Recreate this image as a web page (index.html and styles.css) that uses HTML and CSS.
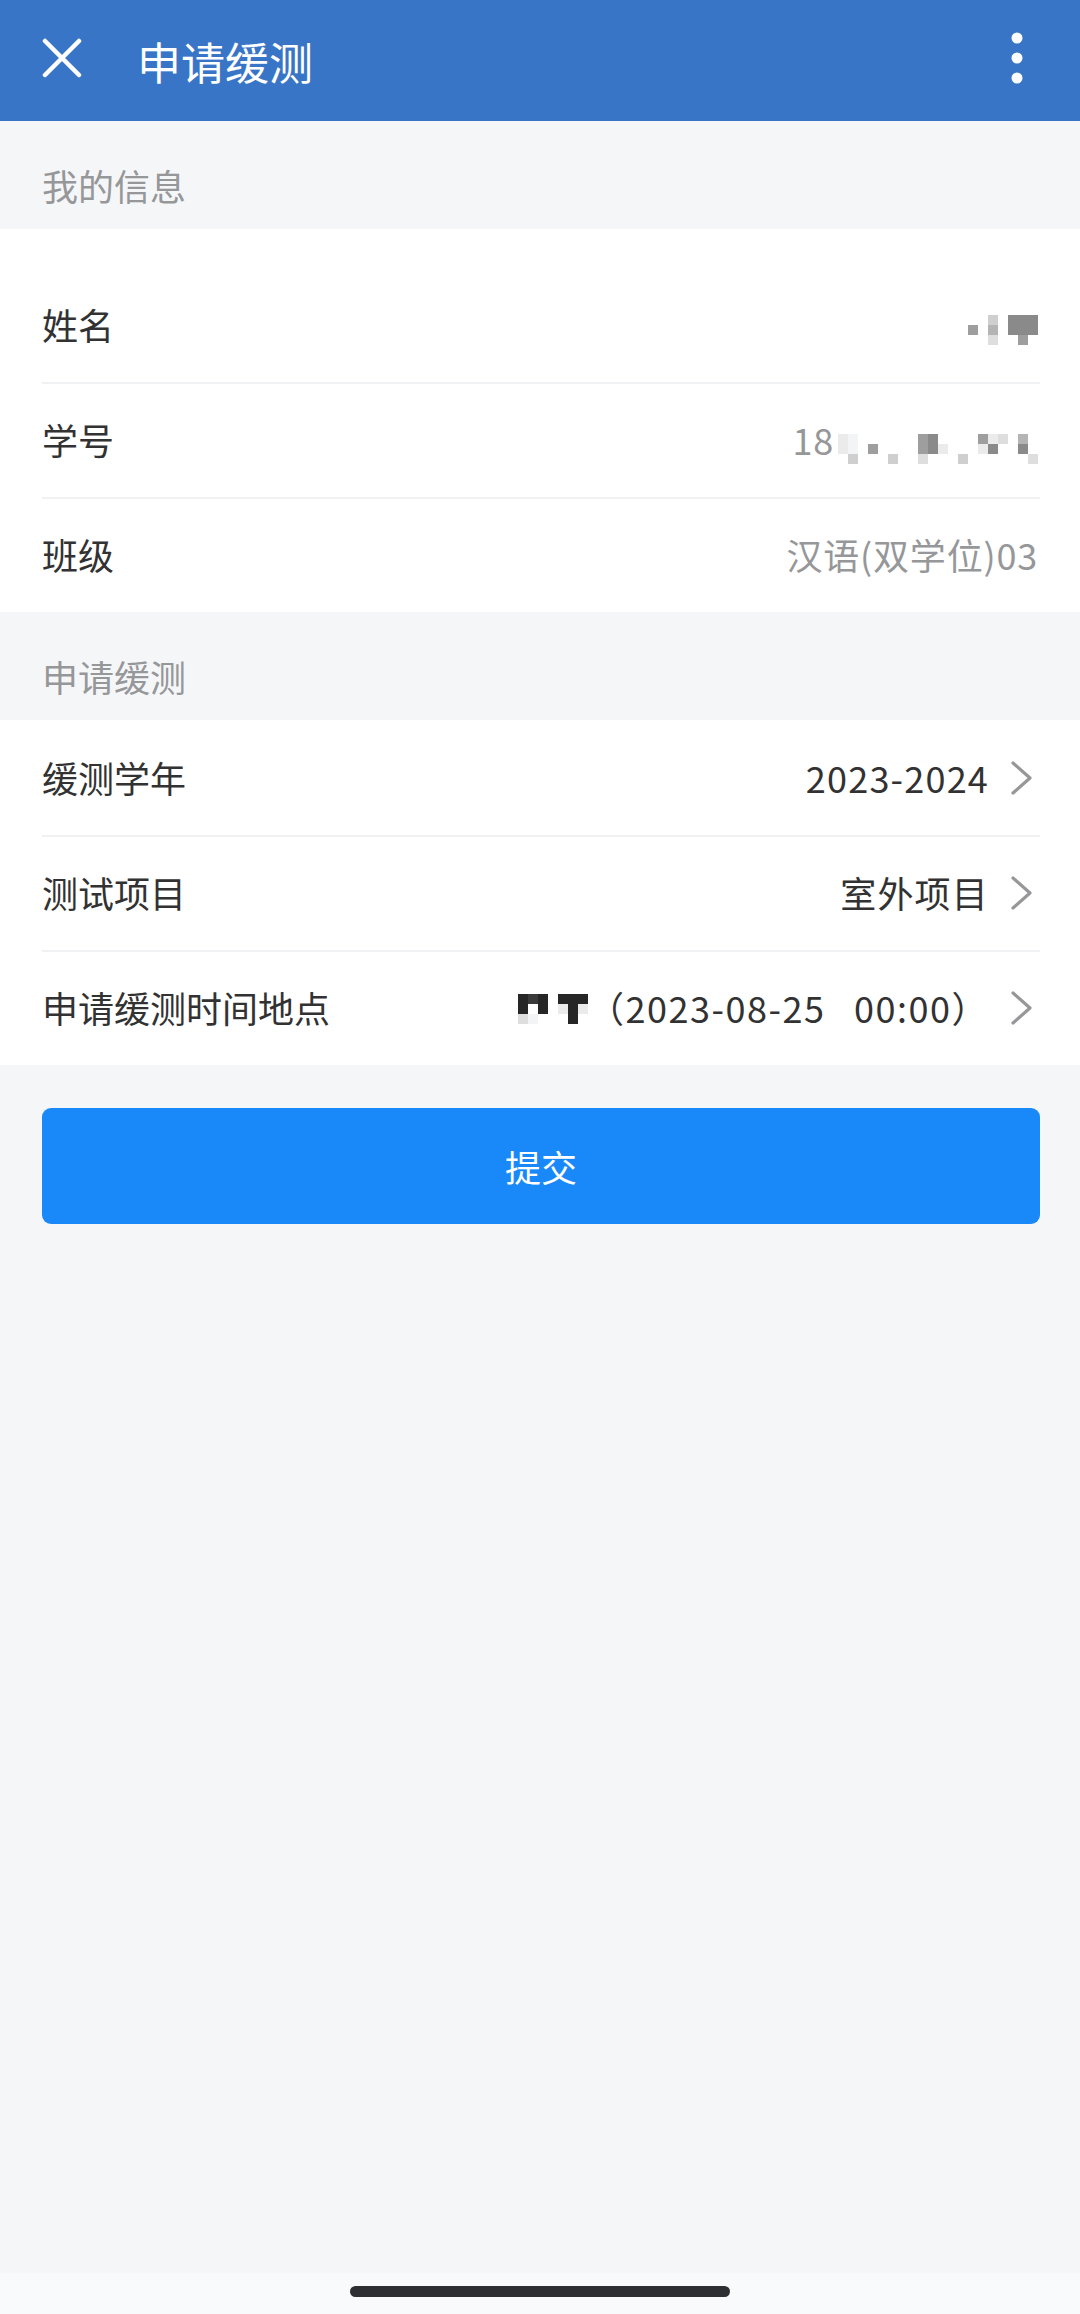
FILE: index.html
```html
<html lang="zh-CN">
<head>
    <meta charset="UTF-8">
    <title>申请缓测</title>
    <link rel="stylesheet" href="styles.css">
</head>
<body>
<div class="page">
    <div class="nav-bar">
        <svg class="nav-icon" width="40" height="40" viewBox="0 0 40 40">
            <path d="M3 3 L37 37 M37 3 L3 37" stroke="#fff" stroke-width="4.5" stroke-linecap="round" fill="none"/>
        </svg>
        <div class="nav-title">申请缓测</div>
        <svg class="nav-icon nav-more" width="24" height="60" viewBox="0 0 24 60">
            <circle cx="12" cy="10" r="5.5" fill="#fff"/>
            <circle cx="12" cy="30" r="5.5" fill="#fff"/>
            <circle cx="12" cy="50" r="5.5" fill="#fff"/>
        </svg>
    </div>

    <div class="content">
        <div class="group-title">我的信息</div>
        <div class="cell-group first-group">
            <div class="cell">
                <div class="cell-label">姓名</div>
                <div class="cell-value">
                    <span class="mosaic mosaic-7 name-mosaic">
                        <i></i><i></i><i class="c"></i><i></i><i class="g"></i><i class="g"></i><i class="g"></i>
                        <i class="h"></i><i></i><i class="a"></i><i></i><i class="g"></i><i class="g"></i><i class="g"></i>
                        <i></i><i></i><i class="d"></i><i></i><i></i><i class="h"></i><i></i>
                    </span>
                </div>
            </div>
            <div class="cell">
                <div class="cell-label">学号</div>
                <div class="cell-value">
                    18
                    <span class="mosaic mosaic-20 id-mosaic">
                        <i class="l"></i><i class="f"></i><i></i><i></i><i></i><i></i><i></i><i></i><i class="h"></i><i class="g"></i><i></i><i></i><i></i><i></i><i class="h"></i><i class="l"></i><i class="d"></i><i></i><i class="a"></i><i></i>
                        <i class="l"></i><i class="f"></i><i></i><i class="h"></i><i></i><i></i><i></i><i></i><i class="h"></i><i class="g"></i><i class="l"></i><i></i><i></i><i></i><i class="l"></i><i class="g"></i><i></i><i></i><i class="g"></i><i></i>
                        <i></i><i class="c"></i><i></i><i></i><i></i><i class="c"></i><i></i><i></i><i class="d"></i><i></i><i></i><i></i><i class="c"></i><i></i><i></i><i></i><i></i><i></i><i></i><i class="d"></i>
                    </span>
                </div>
            </div>
            <div class="cell">
                <div class="cell-label">班级</div>
                <div class="cell-value">汉语(双学位)03</div>
            </div>
        </div>

        <div class="group-title">申请缓测</div>
        <div class="cell-group">
            <div class="cell">
                <div class="cell-label">缓测学年</div>
                <div class="cell-value dark">2023-2024</div>
                <svg class="arrow" width="32" height="44" viewBox="0 0 32 44">
                    <path d="M5 7 L22 22 L5 37" stroke="#969799" stroke-width="3.2" stroke-linecap="round" stroke-linejoin="round" fill="none"/>
                </svg>
            </div>
            <div class="cell">
                <div class="cell-label">测试项目</div>
                <div class="cell-value dark">室外项目</div>
                <svg class="arrow" width="32" height="44" viewBox="0 0 32 44">
                    <path d="M5 7 L22 22 L5 37" stroke="#969799" stroke-width="3.2" stroke-linecap="round" stroke-linejoin="round" fill="none"/>
                </svg>
            </div>
            <div class="cell">
                <div class="cell-label">申请缓测时间地点</div>
                <div class="cell-value dark date-value">
                    <span class="mosaic mosaic-7 date-mosaic">
                        <i class="k"></i><i class="s"></i><i class="k"></i><i></i><i class="k"></i><i class="k"></i><i class="k"></i>
                        <i class="k"></i><i></i><i class="k"></i><i></i><i class="l"></i><i class="k"></i><i class="l"></i>
                        <i class="d"></i><i class="f"></i><i></i><i></i><i></i><i class="k"></i><i></i>
                    </span>
                    （2023-08-25&nbsp;&nbsp;&nbsp;00:00）
                </div>
                <svg class="arrow" width="32" height="44" viewBox="0 0 32 44">
                    <path d="M5 7 L22 22 L5 37" stroke="#969799" stroke-width="3.2" stroke-linecap="round" stroke-linejoin="round" fill="none"/>
                </svg>
            </div>
        </div>

        <button class="submit-button">提交</button>
    </div>

    <div class="home-bar">
        <div class="home-indicator"></div>
    </div>
</div>
</body>
</html>
```

FILE: styles.css
```css
body {
    margin: 0;
    padding: 0;
    font-family: "Noto Sans CJK SC", "Noto Sans", sans-serif;
    background-color: #f5f6f8;
}

.page {
    display: flex;
    flex-direction: column;
    width: 1080px;
    height: 2314px;
}

.nav-bar {
    display: flex;
    align-items: center;
    height: 121px;
    padding: 0 51px 0 42px;
    background-color: #3975c6;
    color: #fff;
    flex-shrink: 0;
}

.nav-icon {
    margin-bottom: 5px;
}

.nav-title {
    margin-left: 55px;
    font-size: 44px;
    line-height: 60px;
}

.nav-more {
    margin-left: auto;
}

.content {
    flex: 1;
}

.group-title {
    padding: 43px 42px 22px;
    font-size: 36px;
    line-height: 43px;
    color: #969799;
}

.cell-group {
    background-color: #fff;
}

.first-group {
    padding-top: 38px;
}

.cell {
    position: relative;
    display: flex;
    align-items: center;
    padding: 25px 42px;
    font-size: 36px;
    line-height: 65px;
}

.cell + .cell::after {
    content: "";
    position: absolute;
    top: 0;
    left: 42px;
    right: 40px;
    height: 2px;
    background-color: #f0f1f3;
}

.cell-label {
    flex: 1;
    color: #323233;
}

.cell-value {
    display: flex;
    align-items: center;
    color: #969799;
    white-space: nowrap;
    letter-spacing: 0.8px;
}

.cell-value.dark {
    color: #323233;
    letter-spacing: 1.2px;
}

.cell-value.date-value {
    letter-spacing: 1.5px;
}

.arrow {
    margin-left: 19px;
    margin-right: -2px;
}

.mosaic {
    display: grid;
    grid-auto-rows: 10px;
}

.mosaic-7 {
    grid-template-columns: repeat(7, 10px);
}

.mosaic-20 {
    grid-template-columns: repeat(20, 10px);
}

.name-mosaic {
    margin-top: 11px;
}

.id-mosaic {
    margin-top: 19px;
    margin-left: 4px;
}

.date-mosaic {
    margin-top: 3px;
}

.mosaic i {
    display: block;
}

.mosaic .k { background-color: #262626; }
.mosaic .s { background-color: #3a3a3a; }
.mosaic .g { background-color: #8a8a8a; }
.mosaic .h { background-color: #9e9e9e; }
.mosaic .a { background-color: #b4b4b4; }
.mosaic .c { background-color: #cfcfcf; }
.mosaic .d { background-color: #dedede; }
.mosaic .l { background-color: #ebebeb; }
.mosaic .f { background-color: #f3f4f6; }

.submit-button {
    display: block;
    width: 998px;
    height: 116px;
    margin: 43px 0 0 42px;
    border: none;
    border-radius: 9px;
    background-color: #1989fa;
    color: #fff;
    font-family: inherit;
    font-size: 36px;
}

.home-bar {
    display: flex;
    justify-content: center;
    height: 41px;
    background-color: #f9fafc;
    flex-shrink: 0;
}

.home-indicator {
    width: 380px;
    height: 11px;
    margin-top: 13px;
    border-radius: 6px;
    background-color: #2e2f32;
}
```
